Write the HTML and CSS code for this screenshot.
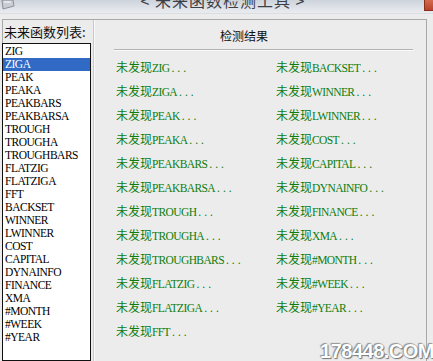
FILE: index.html
```html
<!DOCTYPE html>
<html>
<head>
<meta charset="utf-8">
<link rel="stylesheet" href="styles.css">
</head>
<body>
<div class="window">
  <div class="titlebar">
    <svg class="app-icon" width="16" height="12" viewBox="0 0 16 12"><path d="M2 0 L13 0 L14 6 L3 9 Z" fill="#c9ccd2" stroke="#8c9099" stroke-width="1"/><path d="M4 2 L11 2" stroke="#fff" stroke-width="1"/></svg>
    <div class="title">&lt; 未来函数检测工具 &gt;</div>
    <div class="close"></div>
  </div>
  <div class="frame">
    <div class="left">
      <div class="label">未来函数列表:</div>
      <ul class="listbox">
        <li>ZIG</li>
        <li class="sel">ZIGA</li>
        <li>PEAK</li>
        <li>PEAKA</li>
        <li>PEAKBARS</li>
        <li>PEAKBARSA</li>
        <li>TROUGH</li>
        <li>TROUGHA</li>
        <li>TROUGHBARS</li>
        <li>FLATZIG</li>
        <li>FLATZIGA</li>
        <li>FFT</li>
        <li>BACKSET</li>
        <li>WINNER</li>
        <li>LWINNER</li>
        <li>COST</li>
        <li>CAPITAL</li>
        <li>DYNAINFO</li>
        <li>FINANCE</li>
        <li>XMA</li>
        <li>#MONTH</li>
        <li>#WEEK</li>
        <li>#YEAR</li>
      </ul>
    </div>
    <div class="right">
      <div class="heading">检测结果</div>
      <div class="rule"></div>
      <div class="results">
        <div class="col">
          <div class="res">未发现<span class="m">ZIG<span class="d">...</span></span></div>
          <div class="res">未发现<span class="m">ZIGA<span class="d">...</span></span></div>
          <div class="res">未发现<span class="m">PEAK<span class="d">...</span></span></div>
          <div class="res">未发现<span class="m">PEAKA<span class="d">...</span></span></div>
          <div class="res">未发现<span class="m">PEAKBARS<span class="d">...</span></span></div>
          <div class="res">未发现<span class="m">PEAKBARSA<span class="d">...</span></span></div>
          <div class="res">未发现<span class="m">TROUGH<span class="d">...</span></span></div>
          <div class="res">未发现<span class="m">TROUGHA<span class="d">...</span></span></div>
          <div class="res">未发现<span class="m">TROUGHBARS<span class="d">...</span></span></div>
          <div class="res">未发现<span class="m">FLATZIG<span class="d">...</span></span></div>
          <div class="res">未发现<span class="m">FLATZIGA<span class="d">...</span></span></div>
          <div class="res">未发现<span class="m">FFT<span class="d">...</span></span></div>
        </div>
        <div class="col">
          <div class="res">未发现<span class="m">BACKSET<span class="d">...</span></span></div>
          <div class="res">未发现<span class="m">WINNER<span class="d">...</span></span></div>
          <div class="res">未发现<span class="m">LWINNER<span class="d">...</span></span></div>
          <div class="res">未发现<span class="m">COST<span class="d">...</span></span></div>
          <div class="res">未发现<span class="m">CAPITAL<span class="d">...</span></span></div>
          <div class="res">未发现<span class="m">DYNAINFO<span class="d">...</span></span></div>
          <div class="res">未发现<span class="m">FINANCE<span class="d">...</span></span></div>
          <div class="res">未发现<span class="m">XMA<span class="d">...</span></span></div>
          <div class="res">未发现<span class="m">#MONTH<span class="d">...</span></span></div>
          <div class="res">未发现<span class="m">#WEEK<span class="d">...</span></span></div>
          <div class="res">未发现<span class="m">#YEAR<span class="d">...</span></span></div>
        </div>
      </div>
      <div class="watermark">178448.COM</div>
    </div>
  </div>
</div>
</body>
</html>
```
FILE: styles.css
```css
* { box-sizing: border-box; }
html, body { margin: 0; padding: 0; }
body {
  width: 433px;
  height: 361px;
  overflow: hidden;
  background: #ececec;
  font-family: "Noto Sans CJK SC", "Liberation Sans", sans-serif;
}
.window {
  width: 433px;
  height: 361px;
  display: flex;
  flex-direction: column;
}
.titlebar {
  height: 14px;
  flex: none;
  display: flex;
  align-items: flex-start;
  justify-content: space-between;
  background: linear-gradient(#cdd3dc, #e2e5ea 70%, #e9ebee);
  border-bottom: 1px solid #dadde2;
  overflow: hidden;
}
.title {
  font-size: 16px;
  line-height: 16px;
  color: #3c3f45;
  margin-top: -8px;
  letter-spacing: 1px;
  margin-left: 6px;
}
.close {
  width: 9px;
  height: 11px;
  background: linear-gradient(#d46a4e, #b8432a);
  border: 1px solid #8a2f1c;
  border-right: none;
  border-top: none;
}
.frame {
  flex: 1;
  margin: 5px 6px 0 2px;
  border-top: 1px solid #a8a8a8;
  border-right: 1px solid #a8a8a8;
  display: flex;
  min-height: 0;
}
.left {
  width: 89px;
  flex: none;
  display: flex;
  flex-direction: column;
  border-left: 1px solid #a8a8a8;
}
.label {
  height: 23px;
  flex: none;
  font-size: 13px;
  line-height: 24px;
  padding-left: 1px;
  color: #111;
}
.listbox {
  flex: 1;
  margin: 0 0 0 -1px;
  padding: 1px 0 0 0;
  list-style: none;
  background: #fff;
  border: 1px solid #111;
}
.listbox li {
  height: 13px;
  line-height: 13px;
  font-family: "Liberation Serif", serif;
  font-size: 11.5px;
  letter-spacing: -0.5px;
  padding-left: 2px;
  color: #000;
  white-space: nowrap;
}
.listbox li.sel {
  background: #316ac5;
  color: #fff;
}
.right {
  flex: 1;
  border-left: 1px solid #c8c8c8;
  margin-left: 2px;
  box-shadow: inset 1px 0 0 #fafafa;
  position: relative;
  display: flex;
  flex-direction: column;
}
.heading {
  font-size: 12px;
  line-height: 14px;
  height: 14px;
  margin-top: 9px;
  padding-left: 126px;
  color: #111;
}
.rule {
  height: 2px;
  margin: 6px 23px 0 20px;
  border-top: 1px solid #b4b4b4;
  border-bottom: 1px solid #fafafa;
}
.results {
  display: flex;
  padding-left: 22px;
  margin-top: 4px;
}
.col { width: 160px; }
.res {
  height: 24px;
  line-height: 24px;
  font-size: 12px;
  color: #0d7d0d;
  white-space: nowrap;
}
.m {
  font-family: "Liberation Serif", serif;
  font-size: 11.5px;
  letter-spacing: -0.6px;
}
.d {
  letter-spacing: 3px;
  padding-left: 2px;
}
.watermark {
  position: absolute;
  right: 2px;
  bottom: 1px;
  font-family: "Liberation Sans", sans-serif;
  font-weight: bold;
  font-size: 20px;
  line-height: 18px;
  letter-spacing: -0.5px;
  color: #fff;
  text-shadow: 0 0 1px #666, 1px 1px 1px #777, -1px -1px 1px #999;
}
```
